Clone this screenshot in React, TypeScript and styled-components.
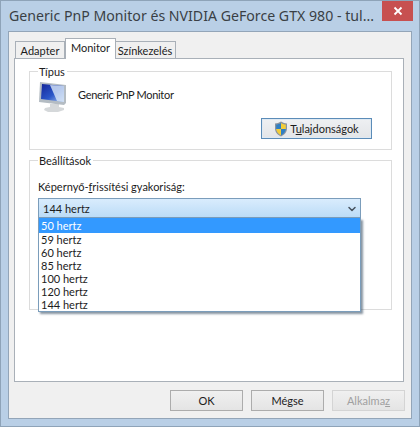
import React from 'react'
import styled, { createGlobalStyle } from 'styled-components'
import { ChevronDown } from 'lucide-react'

const GlobalStyle = createGlobalStyle`
  html, body {
    margin: 0;
    padding: 0;
    background: #b9cfe6;
  }
  * {
    box-sizing: border-box;
  }
`

const Frame = styled.div`
  width: 420px;
  height: 427px;
  background: #b9cfe6;
  border: 1px solid #8ea3b8;
  padding: 0 7px 7px;
  display: flex;
  flex-direction: column;
  font-family: 'Lato', 'Noto Sans', sans-serif;
  font-size: 11px;
  color: #1c1c1c;
  overflow: hidden;
`

const TitleBar = styled.div`
  height: 30px;
  display: flex;
  align-items: flex-start;
  justify-content: space-between;
  flex: none;
`

const Title = styled.div`
  font-family: 'Noto Sans', sans-serif;
  font-size: 14.15px;
  line-height: 20px;
  padding: 5px 0 0 1px;
  color: #3a3f45;
  white-space: nowrap;
`

const CloseButton = styled.div`
  width: 31px;
  height: 20px;
  margin-right: -1px;
  background: #c75050;
  display: flex;
  align-items: center;
  justify-content: center;
`

const Client = styled.div`
  flex: 1;
  background: #f0f0f0;
  border: 1px solid #93a5b8;
  padding: 6px 7px 0 5px;
  display: flex;
  flex-direction: column;
`

const TabStrip = styled.div`
  display: flex;
  align-items: flex-end;
  height: 21px;
  padding-left: 2px;
  position: relative;
  z-index: 1;
  flex: none;
`

const Tab = styled.div<{ $active?: boolean; $width: number }>`
  width: ${p => p.$width}px;
  height: ${p => (p.$active ? 21 : 18)}px;
  background: ${p => (p.$active ? '#fff' : '#f0f0f0')};
  border: 1px solid #a9b0b8;
  border-bottom: ${p => (p.$active ? 'none' : '1px solid #a9b0b8')};
  margin-left: ${p => (p.$active ? 0 : -1)}px;
  margin-right: ${p => (p.$active ? -1 : 0)}px;
  position: relative;
  z-index: ${p => (p.$active ? 2 : 1)};
  text-align: center;
  line-height: ${p => (p.$active ? 17 : 18)}px;
`

const TabPage = styled.div`
  margin-top: -1px;
  height: 324px;
  background: #fff;
  border: 1px solid #a9b0b8;
  padding: 12px 11px 0 14px;
  display: flex;
  flex-direction: column;
  gap: 10px;
  flex: none;
`

const Group = styled.div<{ $height: number }>`
  height: ${p => p.$height}px;
  border: 1px solid #dcdcdc;
  position: relative;
  flex: none;
`

const Legend = styled.span`
  position: absolute;
  top: -8px;
  left: 8px;
  background: #fff;
  padding: 0 2px 0 1px;
  line-height: 15px;
`

const MonitorRow = styled.div`
  display: flex;
  align-items: center;
  gap: 10px;
  padding: 9px 0 6px 8px;
`

const MonitorName = styled.span`
  margin-bottom: 4px;
  letter-spacing: -0.3px;
`

const ActionRow = styled.div`
  display: flex;
  justify-content: flex-end;
  padding: 0 19px 0 0;
`

const ElevatedButton = styled.div`
  width: 111px;
  height: 21px;
  background: linear-gradient(#eef0f2, #e3e5e8);
  border: 1px solid #5b8cb8;
  box-shadow: inset 0 0 0 1px #dfe9f2;
  display: flex;
  align-items: center;
  justify-content: center;
  gap: 2px;
`

const RateField = styled.div`
  padding: 18px 30px 0 8px;
  position: relative;
`

const FieldLabel = styled.div`
  line-height: 15px;
  margin-bottom: 4px;
`

const Select = styled.div`
  height: 20px;
  background: linear-gradient(#d9ecfd, #bcdcf7);
  border: 1px solid #7b9dbb;
  display: flex;
  align-items: center;
  justify-content: space-between;
  padding: 1px 2px 0 4px;
`

const Dropdown = styled.div`
  position: absolute;
  top: 57px;
  left: 8px;
  right: 30px;
  height: 94px;
  background: #fff;
  border: 1px solid #7b9dbb;
  border-top: none;
  box-shadow: 2px 2px 2px rgba(70, 90, 110, 0.65);
  z-index: 3;
`

const Option = styled.div<{ $selected?: boolean }>`
  height: ${p => (p.$selected ? 15 : 13)}px;
  line-height: ${p => (p.$selected ? 16 : 13)}px;
  padding-left: 2px;
  background: ${p => (p.$selected ? '#3399ff' : 'transparent')};
  color: ${p => (p.$selected ? '#fff' : '#1c1c1c')};
`

const ButtonBar = styled.div`
  flex: 1;
  display: flex;
  justify-content: flex-end;
  align-items: flex-start;
  gap: 8px;
  padding: 8px 0 0 0;
  margin-right: -1px;
`

const DialogButton = styled.div<{ $disabled?: boolean }>`
  width: 73px;
  height: 21px;
  background: linear-gradient(#f0f0f0, #e4e4e4);
  border: 1px solid ${p => (p.$disabled ? '#d4d4d4' : '#acacac')};
  color: ${p => (p.$disabled ? '#a0a0a0' : '#1c1c1c')};
  text-align: center;
  line-height: 19px;
`

const MonitorIcon = () => (
  <svg width="30" height="31" viewBox="0 0 30 31">
    <defs>
      <linearGradient id="screen" x1="0" y1="0" x2="1" y2="1">
        <stop offset="0" stopColor="#14269a" />
        <stop offset="0.55" stopColor="#2a56c8" />
        <stop offset="1" stopColor="#a9c6ee" />
      </linearGradient>
    </defs>
    <path d="M12 23h9v3l5 1v2l-6 2H10l-4-2 1-2 5-1z" fill="#d5d8da" />
    <path d="M2 1l26 3v18l-2 2L1 21z" fill="#b4bcc3" />
    <path d="M4 3l22 2v16L3 18z" fill="url(#screen)" />
    <path d="M12 4l14 1v16l-7-1z" fill="#dbe7f6" opacity="0.8" />
  </svg>
)

const ShieldIcon = () => (
  <svg width="14" height="16" viewBox="0 0 14 16">
    <path d="M7 0.5c2 1.300 4 1.800 6 2v5c0 3.600-2.600 6.200-6 8-3.400-1.800-6-4.400-6-8v-5c2-.2 4-.7 6-2z" fill="#8a94a0" />
    <path d="M7 2v6H2.200V3.600C4 3.400 5.500 3 7 2z" fill="#2f7fc4" />
    <path d="M7 2c1.500 1 3 1.400 4.800 1.600V8H7z" fill="#f2cd3a" />
    <path d="M2.200 8H7v6.300C4.400 12.900 2.400 11 2.200 8z" fill="#f2cd3a" />
    <path d="M7 8h4.800c-.2 3-2.200 4.900-4.800 6.300z" fill="#2f7fc4" />
  </svg>
)

const rates = ['50 hertz', '59 hertz', '60 hertz', '85 hertz', '100 hertz', '120 hertz', '144 hertz']

export default function App() {
  return (
    <>
      <GlobalStyle />
      <Frame>
        <TitleBar>
          <Title>Generic PnP Monitor és NVIDIA GeForce GTX 980 - tul...</Title>
          <CloseButton>
            <svg width="10" height="10" viewBox="0 0 10 10">
              <path d="M1.500 1.500l7 7M8.500 1.500l-7 7" stroke="#fff" strokeWidth="1.800" />
            </svg>
          </CloseButton>
        </TitleBar>
        <Client>
          <TabStrip>
            <Tab $width={50}>Adapter</Tab>
            <Tab $active $width={51}>Monitor</Tab>
            <Tab $width={62}>Színkezelés</Tab>
          </TabStrip>
          <TabPage>
            <Group $height={79}>
              <Legend>Típus</Legend>
              <MonitorRow>
                <MonitorIcon />
                <MonitorName>Generic PnP Monitor</MonitorName>
              </MonitorRow>
              <ActionRow>
                <ElevatedButton>
                  <ShieldIcon />
                  <span>T<u>u</u>lajdonságok</span>
                </ElevatedButton>
              </ActionRow>
            </Group>
            <Group $height={150}>
              <Legend>Beállítások</Legend>
              <RateField>
                <FieldLabel>Képernyő-<u>f</u>rissítési gyakoriság:</FieldLabel>
                <Select>
                  <span>144 hertz</span>
                  <ChevronDown size={12} strokeWidth={3} color="#47525e" />
                </Select>
              </RateField>
              <Dropdown>
                {rates.map((rate, i) => (
                  <Option key={rate} $selected={i === 0}>{rate}</Option>
                ))}
              </Dropdown>
            </Group>
          </TabPage>
          <ButtonBar>
            <DialogButton>OK</DialogButton>
            <DialogButton>Mégse</DialogButton>
            <DialogButton $disabled>Alkalma<u>z</u></DialogButton>
          </ButtonBar>
        </Client>
      </Frame>
    </>
  )
}
